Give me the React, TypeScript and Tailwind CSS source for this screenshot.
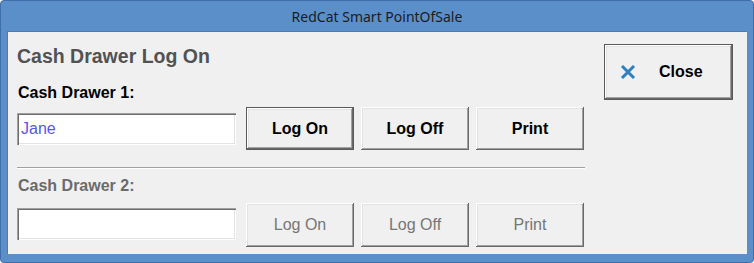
import React from "react";

const btnBase =
  "flex items-center justify-center bg-[#f0f0f0] text-[16px] font-bold leading-none";
const raised =
  "shadow-[inset_-1px_-1px_0_#696969,inset_1px_1px_0_#ffffff,inset_-2px_-2px_0_#a0a0a0,inset_2px_2px_0_#e3e3e3]";

function Btn({
  label,
  w,
  h,
  def,
  disabled,
}: {
  label: string;
  w: string;
  h: string;
  def?: boolean;
  disabled?: boolean;
}) {
  return (
    <div
      className={`${btnBase} ${w} ${h} ${def ? "border border-[#5a5a5a]" : ""} ${raised} ${
        disabled ? "text-[#767676] font-normal" : "text-black"
      }`}
    >
      {label}
    </div>
  );
}

function Input({ value }: { value?: string }) {
  return (
    <div className="w-[219px] h-[32px] bg-white flex items-center pl-[4px] text-[16px] text-[#5656ea] shadow-[inset_1px_1px_0_#a0a0a0,inset_2px_2px_0_#6e6e6e,inset_-1px_-1px_0_#ffffff,inset_-2px_-2px_0_#e3e3e3]">
      {value}
    </div>
  );
}

export default function App() {
  return (
    <div
      className="w-[754px] h-[263px] bg-[#5b8fca] border border-[#3f6ea9] rounded-[4px] flex flex-col"
      style={{ fontFamily: '"Liberation Sans", Arial, sans-serif' }}
    >
      <div
        className="h-[30px] flex items-center justify-center text-[14px] text-[#1c1c1c]"
        style={{ fontFamily: '"Noto Sans", "Open Sans", sans-serif' }}
      >
        RedCat Smart PointOfSale
      </div>
      <div className="mx-[6px] h-[223px] bg-[#f0f0f0] border-l border-t border-[#4a7bb6] flex pl-[9px]">
        <div className="w-[568px] flex flex-col pt-[13px]">
          <div className="h-[22px] leading-[22px] text-[19.5px] font-bold text-[#525252]">
            Cash Drawer Log On
          </div>
          <div className="mt-[17px] h-[18px] leading-[18px] text-[16px] font-bold text-black pl-[1px]">
            Cash Drawer 1:
          </div>
          <div className="mt-[5px] flex items-start">
            <div className="mt-[6px]">
              <Input value="Jane" />
            </div>
            <div className="ml-[10px] flex gap-[7px]">
              <Btn label="Log On" w="w-[108px]" h="h-[43px]" def />
              <Btn label="Log Off" w="w-[108px]" h="h-[43px]" />
              <Btn label="Print" w="w-[108px]" h="h-[43px]" />
            </div>
          </div>
          <div className="mt-[17px] h-[2px] border-t border-[#a0a0a0] border-b border-b-white" />
          <div className="mt-[8px] h-[18px] leading-[18px] text-[16px] font-bold text-[#6b6b6b] pl-[1px]">
            Cash Drawer 2:
          </div>
          <div className="mt-[8px] flex items-start">
            <div className="mt-[5px]">
              <Input />
            </div>
            <div className="ml-[10px] flex gap-[7px]">
              <Btn label="Log On" w="w-[108px]" h="h-[44px]" disabled />
              <Btn label="Log Off" w="w-[108px]" h="h-[44px]" disabled />
              <Btn label="Print" w="w-[108px]" h="h-[44px]" disabled />
            </div>
          </div>
        </div>
        <div className="ml-[19px] mt-[12px]">
          <div
            className={`w-[129px] h-[56px] bg-[#f0f0f0] border border-[#5a5a5a] ${raised} flex items-center text-[16px] font-bold text-black`}
          >
            <svg width="16" height="14" viewBox="0 0 16 14" className="ml-[15px]">
              <path d="M2 1 L14 13 M14 1 L2 13" stroke="#2f80c3" strokeWidth="3" />
            </svg>
            <span className="ml-[23px]">Close</span>
          </div>
        </div>
      </div>
    </div>
  );
}
